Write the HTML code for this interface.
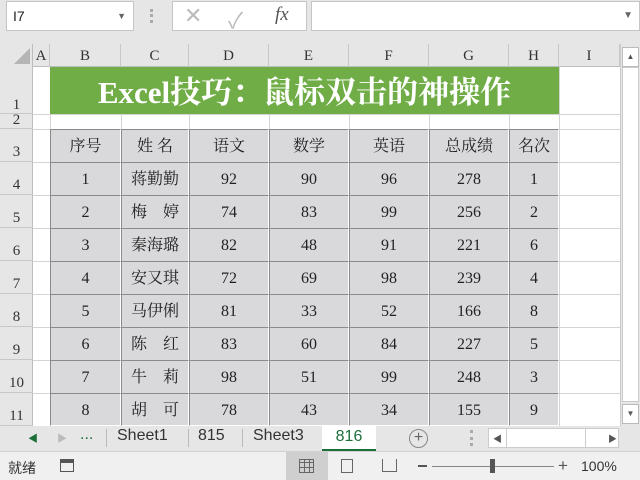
<!DOCTYPE html><html><head><meta charset="utf-8"><style>
*{margin:0;padding:0;box-sizing:border-box}
body{width:640px;height:480px;overflow:hidden;background:#e6e6e6;position:relative;font-family:"Liberation Serif","Noto Serif CJK SC",serif}
.a{position:absolute}
.s{font-family:"Liberation Sans","Noto Sans CJK SC",sans-serif}
.hd{position:absolute;top:44px;height:23px;font-size:15px;text-align:center;line-height:24px;color:#333;border-right:1px solid #c8c8c8}
.rh{position:absolute;left:0;width:33px;font-size:15px;text-align:center;color:#333;border-bottom:1px solid #c8c8c8}
.gl{position:absolute;background:#d4d4d4}
.c{position:absolute;background:#d9d9dc;font-size:16px;text-align:center;border-right:1px solid #fff;border-bottom:1px solid #fff;border-top:1px solid #8a8a8a;border-left:1px solid #8a8a8a;color:#222}
</style></head><body>
<div class="a s" style="left:6px;top:1px;width:128px;height:30px;background:#fff;border:1px solid #c6c6c6;font-size:14px;line-height:28px;padding-left:6px;color:#222">I7<span style="position:absolute;right:7px;top:0;font-size:9px;color:#666">▼</span></div>
<div class="a" style="left:150px;top:9px;width:3px;height:14px;border-left:3px dotted #aaa"></div>
<div class="a" style="left:172px;top:1px;width:135px;height:30px;background:#fff;border:1px solid #c6c6c6"></div>
<div class="a s" style="left:184px;top:3px;font-size:22px;color:#bbb">✕</div>
<div class="a s" style="left:228px;top:3px;font-size:22px;color:#bbb">✓</div>
<div class="a" style="left:275px;top:4px;font-size:19px;font-style:italic;color:#555">fx</div>
<div class="a" style="left:311px;top:1px;width:329px;height:30px;background:#fff;border:1px solid #c6c6c6"><span class="s" style="position:absolute;right:6px;top:8px;font-size:10px;color:#666">▼</span></div>
<div class="a" style="left:0;top:44px;width:620px;height:382px;background:#fff"></div>
<div class="a" style="left:0;top:44px;width:620px;height:23px;background:#e6e6e6;border-bottom:1px solid #bdbdbd"></div>
<div class="a" style="left:0;top:44px;width:33px;height:382px;background:#e6e6e6;border-right:1px solid #bdbdbd"></div>
<div class="a" style="left:14px;top:48px;width:0;height:0;border-left:16px solid transparent;border-bottom:16px solid #b5b5b5"></div>
<div class="hd" style="left:33px;width:17px">A</div>
<div class="hd" style="left:50px;width:71px">B</div>
<div class="hd" style="left:121px;width:68px">C</div>
<div class="hd" style="left:189px;width:80px">D</div>
<div class="hd" style="left:269px;width:80px">E</div>
<div class="hd" style="left:349px;width:80px">F</div>
<div class="hd" style="left:429px;width:80px">G</div>
<div class="hd" style="left:509px;width:50px">H</div>
<div class="hd" style="left:559px;width:61px">I</div>
<div class="rh" style="top:67px;height:47px;line-height:76px">1</div>
<div class="rh" style="top:114px;height:15px;line-height:12px">2</div>
<div class="rh" style="top:129px;height:33px;line-height:46px">3</div>
<div class="rh" style="top:162px;height:33px;line-height:46px">4</div>
<div class="rh" style="top:195px;height:33px;line-height:46px">5</div>
<div class="rh" style="top:228px;height:33px;line-height:46px">6</div>
<div class="rh" style="top:261px;height:33px;line-height:46px">7</div>
<div class="rh" style="top:294px;height:33px;line-height:46px">8</div>
<div class="rh" style="top:327px;height:33px;line-height:46px">9</div>
<div class="rh" style="top:360px;height:33px;line-height:46px">10</div>
<div class="rh" style="top:393px;height:33px;line-height:46px">11</div>
<div class="gl" style="left:50px;top:67px;width:1px;height:359px"></div>
<div class="gl" style="left:559px;top:67px;width:1px;height:359px"></div>
<div class="gl" style="left:33px;top:114px;width:587px;height:1px"></div>
<div class="gl" style="left:33px;top:129px;width:587px;height:1px"></div>
<div class="gl" style="left:33px;top:162px;width:587px;height:1px"></div>
<div class="gl" style="left:33px;top:195px;width:587px;height:1px"></div>
<div class="gl" style="left:33px;top:228px;width:587px;height:1px"></div>
<div class="gl" style="left:33px;top:261px;width:587px;height:1px"></div>
<div class="gl" style="left:33px;top:294px;width:587px;height:1px"></div>
<div class="gl" style="left:33px;top:327px;width:587px;height:1px"></div>
<div class="gl" style="left:33px;top:360px;width:587px;height:1px"></div>
<div class="gl" style="left:33px;top:393px;width:587px;height:1px"></div>
<div class="gl" style="left:121px;top:114px;width:1px;height:15px"></div>
<div class="gl" style="left:189px;top:114px;width:1px;height:15px"></div>
<div class="gl" style="left:269px;top:114px;width:1px;height:15px"></div>
<div class="gl" style="left:349px;top:114px;width:1px;height:15px"></div>
<div class="gl" style="left:429px;top:114px;width:1px;height:15px"></div>
<div class="gl" style="left:509px;top:114px;width:1px;height:15px"></div>
<div class="a" style="left:50px;top:67px;width:509px;height:47px;background:#70ad47;color:#fff;font-size:31px;font-weight:bold;text-align:center;line-height:52px;white-space:nowrap">Excel技巧：鼠标双击的神操作</div>
<div id="t"></div>
<script>
var xs=[50,121,189,269,349,429,509,559];
var rows=[["序号","姓 名","语文","数学","英语","总成绩","名次"],
["1","蒋勤勤","92","90","96","278","1"],["2","梅　婷","74","83","99","256","2"],["3","秦海璐","82","48","91","221","6"],["4","安又琪","72","69","98","239","4"],["5","马伊俐","81","33","52","166","8"],["6","陈　红","83","60","84","227","5"],["7","牛　莉","98","51","99","248","3"],["8","胡　可","78","43","34","155","9"]];
var h="";
for(var r=0;r<rows.length;r++){var y=129+33*r;for(var c=0;c<7;c++){
var t=rows[r][c];
h+='<div class="c" style="left:'+xs[c]+'px;top:'+y+'px;width:'+(xs[c+1]-xs[c])+'px;height:'+(r==8?33:34)+'px;line-height:33px;">'+t+'</div>';}}
document.getElementById("t").outerHTML=h;
</script>
<div class="a" style="left:620px;top:44px;width:20px;height:382px;background:#e6e6e6;border-left:1px solid #ccc"></div>
<div class="a" style="left:622px;top:47px;width:17px;height:20px;background:#fff;border:1px solid #bbb;font-size:8px;text-align:center;line-height:18px;color:#555">▲</div>
<div class="a" style="left:622px;top:67px;width:17px;height:335px;background:#fff;border:1px solid #ccc"></div>
<div class="a" style="left:622px;top:404px;width:17px;height:20px;background:#fff;border:1px solid #bbb;font-size:8px;text-align:center;line-height:18px;color:#555">▼</div>
<div class="a s" style="left:0;top:426px;width:640px;height:26px;background:#e6e6e6;border-bottom:1px solid #d0d0d0;font-size:16px;color:#333">
<span class="a" style="left:28px;top:4px;font-size:10px;color:#1d6f3a">◀</span>
<span class="a" style="left:57px;top:4px;font-size:10px;color:#bbb">▶</span>
<span class="a" style="left:80px;top:0;color:#1d6f3a">...</span>
<span class="a" style="left:106px;top:3px;height:18px;border-left:1px solid #bbb"></span>
<span class="a" style="left:117px;top:1px">Sheet1</span>
<span class="a" style="left:188px;top:3px;height:18px;border-left:1px solid #bbb"></span>
<span class="a" style="left:198px;top:1px">815</span>
<span class="a" style="left:242px;top:3px;height:18px;border-left:1px solid #bbb"></span>
<span class="a" style="left:253px;top:1px">Sheet3</span>
<span class="a" style="left:322px;top:0;width:54px;height:25px;background:#fff;border-bottom:2px solid #1d6f3a;color:#1d6f3a;text-align:center;line-height:22px">816</span>
<span class="a" style="left:409px;top:3px;width:19px;height:19px;border:1px solid #888;border-radius:50%;text-align:center;line-height:16px;color:#666">+</span>
<span class="a" style="left:470px;top:4px;height:16px;border-left:3px dotted #aaa"></span>
<span class="a" style="left:488px;top:2px;width:131px;height:20px;background:#fff;border:1px solid #ccc"></span>
<span class="a" style="left:506px;top:3px;width:80px;height:18px;border-left:1px solid #ccc;border-right:1px solid #ccc"></span>
<span class="a" style="left:493px;top:6px;font-size:9px;color:#555">◀</span>
<span class="a" style="left:608px;top:6px;font-size:9px;color:#555">▶</span>
</div>
<div class="a s" style="left:0;top:452px;width:640px;height:28px;background:#f0f0f0;font-size:14px;color:#333">
<span class="a" style="left:8px;top:6px">就绪</span>
<span class="a" style="left:60px;top:7px;width:14px;height:13px;border:1px solid #555;border-top:4px solid #555"></span>
<span class="a" style="left:286px;top:0;width:42px;height:28px;background:#cfcfcf"></span>
<span class="a" style="left:299px;top:7px;width:15px;height:14px;border:1px solid #666;background:repeating-linear-gradient(90deg,transparent 0 4px,#666 4px 5px),repeating-linear-gradient(0deg,transparent 0 4px,#666 4px 5px)"></span>
<span class="a" style="left:341px;top:7px;width:12px;height:14px;border:1px solid #666"></span>
<span class="a" style="left:382px;top:7px;width:15px;height:13px;border:1px solid #666;border-top:none"></span>
<span class="a" style="left:418px;top:13px;width:9px;height:2px;background:#555"></span>
<span class="a" style="left:432px;top:14px;width:122px;height:1px;background:#888"></span>
<span class="a" style="left:490px;top:7px;width:5px;height:14px;background:#555"></span>
<span class="a" style="left:558px;top:4px;font-size:17px;color:#555">+</span>
<span class="a" style="left:581px;top:6px">100%</span>
</div>
</body></html>
